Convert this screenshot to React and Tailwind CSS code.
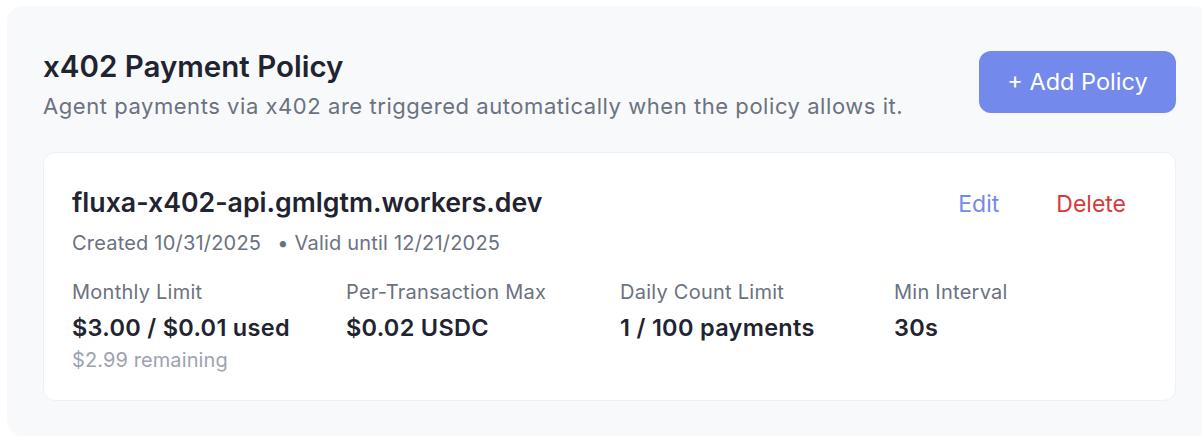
export default function App() {
  const stats = [
    { label: "Monthly Limit", value: "$3.00 / $0.01 used", sub: "$2.99 remaining" },
    { label: "Per-Transaction Max", value: "$0.02 USDC" },
    { label: "Daily Count Limit", value: "1 / 100 payments" },
    { label: "Min Interval", value: "30s" },
  ];

  return (
    <div className="h-[438px] overflow-hidden bg-white pt-[6px] pl-[7px] font-['Inter',sans-serif]">
      <section className="h-[430px] w-[1205px] rounded-2xl bg-[#f8f9fb] px-[36px] pt-[40px]">
        <div className="flex items-start justify-between">
          <div>
            <h2 className="text-[29.5px] font-semibold leading-[40px] text-[#1f2430]">x402 Payment Policy</h2>
            <p className="mt-[5px] text-[22px] leading-[30px] tracking-[0.55px] text-[#6b7280]">
              Agent payments via x402 are triggered automatically when the policy allows it.
            </p>
          </div>
          <button className="mt-[5px] h-[62px] w-[197px] rounded-xl bg-[#7389ec] text-[23.5px] text-white">
            + Add Policy
          </button>
        </div>

        <div className="mt-[31px] h-[249px] rounded-xl border border-[#eef0f3] bg-white pl-[28px] pr-[49px] pt-[31px]">
          <div className="flex items-start justify-between">
            <div>
              <div className="text-[26.7px] font-semibold leading-[36px] text-[#1f2430]">fluxa-x402-api.gmlgtm.workers.dev</div>
              <div className="mt-[9px] text-[20px] leading-[28px] tracking-[0.2px] text-[#6b7280]">
                Created 10/31/2025<span className="ml-[16px]">• Valid until 12/21/2025</span>
              </div>
            </div>
            <div className="flex gap-[57px] pt-[4px] text-[23px] leading-[32px]">
              <button className="text-[#7389ec]">Edit</button>
              <button className="text-[#d63a3a]">Delete</button>
            </div>
          </div>

          <div className="mt-[21px] flex">
            {stats.map((s) => (
              <div key={s.label} className="w-[274px] shrink-0">
                <div className="text-[20px] leading-[28px] tracking-[0.25px] text-[#6b7280]">{s.label}</div>
                <div className="mt-[6px] text-[23.5px] font-semibold leading-[32px] tracking-[0.3px] text-[#1f2430]">{s.value}</div>
                {s.sub && <div className="mt-[2px] text-[20px] leading-[28px] tracking-[0.1px] text-[#9ca3af]">{s.sub}</div>}
              </div>
            ))}
          </div>
        </div>
      </section>
    </div>
  );
}
